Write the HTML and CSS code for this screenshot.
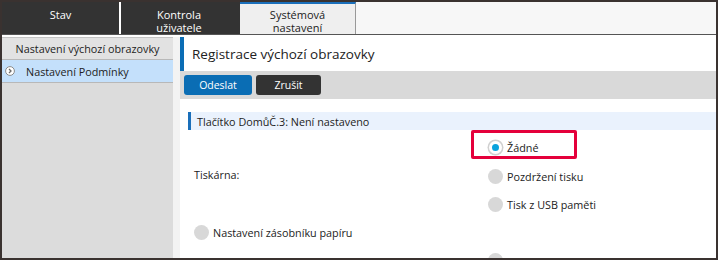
FILE: index.html
```html
<!DOCTYPE html>
<html lang="cs">
<head>
  <meta charset="UTF-8">
  <title>Systémová nastavení</title>
  <link rel="stylesheet" href="styles.css">
</head>
<body>
<div class="frame">
  <div class="tabs">
    <div class="tab dark">Stav</div>
    <div class="tab dark sep">Kontrola<br>uživatele</div>
    <div class="tab active">Systémová<br>nastavení</div>
  </div>

  <div class="page">
    <div class="sidebar">
      <div class="side-item">Nastavení výchozí obrazovky</div>
      <div class="side-item current">
        <span class="chev">
          <svg width="10" height="10" viewBox="0 0 10 10"><circle cx="5" cy="5" r="4.4" fill="#fff" stroke="#8a8a8a" stroke-width="1"/><path d="M4 3 L6 5 L4 7" fill="none" stroke="#6a6a6a" stroke-width="1.3"/></svg>
        </span>
        Nastavení Podmínky
      </div>
    </div>

    <div class="main">
      <div class="title">Registrace výchozí obrazovky</div>
      <div class="toolbar">
        <button class="btn blue">Odeslat</button>
        <button class="btn black">Zrušit</button>
      </div>

      <div class="section">Tlačítko DomůČ.3: Není nastaveno</div>

      <div class="row">
        <div class="label">Tiskárna:</div>
        <div class="options">
          <div class="option marked"><span class="radio on"></span>Žádné</div>
          <div class="option"><span class="radio"></span>Pozdržení tisku</div>
          <div class="option"><span class="radio"></span>Tisk z USB paměti</div>
        </div>
      </div>

      <div class="row single">
        <div class="option plain"><span class="radio"></span>Nastavení zásobníku papíru</div>
      </div>

      <div class="row">
        <div class="label"></div>
        <div class="options">
          <div class="option"><span class="radio"></span></div>
        </div>
      </div>
    </div>
  </div>
</div>
</body>
</html>
```

FILE: styles.css
```css
body {
  margin: 0;
  font-family: 'Open Sans', 'Noto Sans', sans-serif;
  color: #222;
}
.frame {
  width: 718px;
  height: 260px;
  box-sizing: border-box;
  border: 2px solid #3a3230;
  overflow: hidden;
  display: flex;
  flex-direction: column;
  background: #fff;
}
/* Top tabs */
.tabs {
  display: flex;
  height: 32px;
  flex-shrink: 0;
  background: #f7f7f7;
  border-bottom: 1px solid #555;
}
.tab {
  width: 117px;
  box-sizing: border-box;
  padding-top: 6px;
  text-align: center;
  font-size: 11px;
  line-height: 13px;
}
.dark {
  background: #333;
  color: #fff;
}
.sep {
  border-left: 2px solid #fff;
  width: 121px;
  border-right: 3px solid #333;
}
.active {
  width: 116px;
  background: #efefef;
  border-top: 2px solid #1a6fba;
  border-right: 1px solid #999;
  color: #222;
  padding-top: 4px;
}
/* Page body */
.page {
  flex: 1;
  display: flex;
  padding-top: 2px;
  min-height: 0;
}
.sidebar {
  width: 171px;
  background: #dcdcdc;
  flex-shrink: 0;
}
.side-item {
  height: 21px;
  display: flex;
  align-items: center;
  justify-content: center;
  font-size: 10.8px;
  background: #e2e2e2;
  border-top: 1px solid #c4c4c4;
  border-bottom: 1px solid #b8b8b8;
}
.side-item.current {
  justify-content: flex-start;
  background: #c4e0fb;
  border-top: none;
  height: 22px;
  padding-left: 3px;
}
.chev {
  display: flex;
  margin-right: 11px;
}
.main {
  flex: 1;
  padding-left: 7px;
  background: linear-gradient(#f3f3f3, #f3f3f3) left / 7px 100% no-repeat, #fff;
}
.title {
  height: 34px;
  display: flex;
  align-items: center;
  background: #fff;
  border-left: 4px solid #0b6db5;
  padding-left: 8px;
  font-size: 13.5px;
  color: #222;
}
.toolbar {
  background: #d9d9d9;
  height: 28px;
  display: flex;
  align-items: center;
  gap: 4px;
  padding-left: 4px;
}
.btn {
  height: 20px;
  border: none;
  border-radius: 3px;
  color: #fff;
  font-family: inherit;
  font-size: 10.5px;
  padding: 0;
  cursor: pointer;
}
.blue {
  width: 68px;
  background: #0a6db4;
}
.black {
  width: 65px;
  background: #333;
}
.section {
  margin: 13px 0 0 8px;
  height: 18px;
  display: flex;
  align-items: center;
  background: #eaf2fd;
  border-left: 3px solid #1a6fba;
  padding-left: 6px;
  font-size: 10.8px;
}
.row {
  display: flex;
  padding-left: 14px;
}
.label {
  width: 277px;
  display: flex;
  align-items: center;
  font-size: 10.8px;
}
.options {
  display: flex;
  flex-direction: column;
}
.option {
  display: flex;
  align-items: center;
  height: 28px;
  padding-left: 17px;
  font-size: 10.8px;
}
.option.marked {
  height: 29px;
  width: 106px;
  box-sizing: border-box;
  border: 3px solid #e4003b;
  border-radius: 2px;
  padding: 5px 0 0 14px;
  margin-bottom: 3px;
}
.option.plain {
  padding-left: 0;
  height: 28px;
}
.radio {
  width: 15px;
  height: 15px;
  border-radius: 50%;
  background: #d8d8d8;
  margin-right: 4px;
  flex-shrink: 0;
  box-sizing: border-box;
}
.radio.on {
  background: #0aa3dd;
  border: 3px solid #fff;
  box-shadow: 0 0 0 1.5px #d0d0d0;
  width: 13px;
  height: 13px;
  margin: 0 5px 0 1px;
}
```
